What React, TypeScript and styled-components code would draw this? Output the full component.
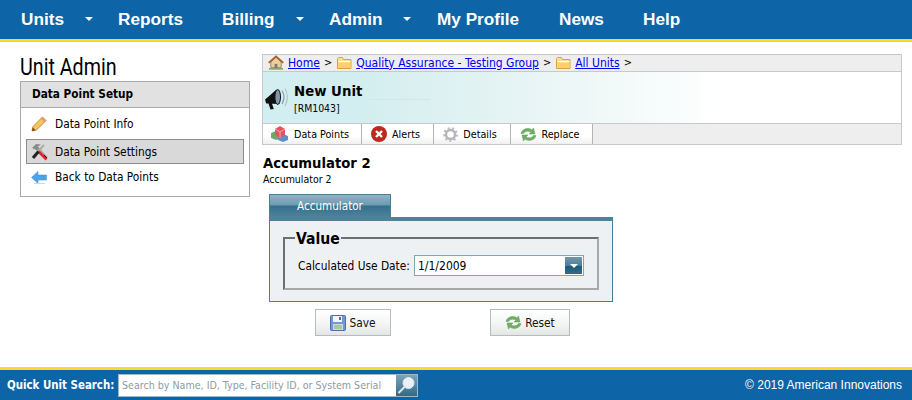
import React from "react";
import styled, { createGlobalStyle } from "styled-components";

const ui = `"DejaVu Sans Condensed", "Noto Sans", sans-serif`;

const Global = createGlobalStyle`
  html, body { margin: 0; padding: 0; background: #fff; }
  body { font-family: ${ui}; color: #000; }
`;

const Page = styled.div`
  width: 912px;
  height: 400px;
  display: flex;
  flex-direction: column;
  overflow: hidden;
`;

const Header = styled.nav`
  height: 39px;
  flex: none;
  box-sizing: content-box;
  background: #0d64a6;
  border-bottom: 3px solid #fcd925;
  display: flex;
  align-items: center;
  padding-left: 21px;
`;

const NavItem = styled.a<{ $w: number }>`
  width: ${(p) => p.$w}px;
  flex: none;
  display: flex;
  align-items: center;
  font: bold 17.2px "Liberation Sans", Arial, sans-serif;
  color: #fff;
  position: relative;
`;

const Caret = styled.span<{ $x: number }>`
  position: absolute;
  left: ${(p) => p.$x}px;
  top: 8px;
  width: 0;
  height: 0;
  border-left: 4px solid transparent;
  border-right: 4px solid transparent;
  border-top: 4px solid #fff;
`;

const Main = styled.main`
  flex: 1;
  display: flex;
  align-items: flex-start;
  padding: 12px 10px 0 20px;
  min-height: 0;
`;

const Side = styled.aside`
  width: 230px;
  flex: none;
  margin-right: 12px;
`;

const PageTitle = styled.h1`
  margin: 0;
  height: 27px;
  white-space: nowrap;
  font: 400 24px/27px Roboto, sans-serif;
  transform: scaleX(0.82);
  transform-origin: left center;
`;

const SideBox = styled.div`
  border: 1px solid #a9a9a9;
  box-sizing: border-box;
  height: 116px;
`;

const SideHead = styled.div`
  height: 25px;
  background: #e1e1e1;
  border-bottom: 1px solid #a9a9a9;
  font: bold 11.7px/25px ${ui};
  padding-left: 11px;
`;

const SideList = styled.div`
  display: flex;
  flex-direction: column;
  padding: 3px 5px 0;
`;

const SideItem = styled.div<{ $active?: boolean }>`
  height: ${(p) => (p.$active ? 25 : 26)}px;
  margin-top: ${(p) => (p.$active ? 2 : 0)}px;
  box-sizing: border-box;
  display: flex;
  align-items: center;
  padding-left: ${(p) => (p.$active ? 4 : 5)}px;
  font: 11.8px ${ui};
  background: ${(p) => (p.$active ? "#d9d9d9" : "transparent")};
  border: ${(p) => (p.$active ? "1px solid #8c8c8c" : "none")};
`;

const SideIcon = styled.span`
  width: 24px;
  flex: none;
  display: flex;
  align-items: center;
`;

const Content = styled.section`
  width: 640px;
  flex: none;
`;

const UnitCard = styled.div`
  border: 1px solid #c8c8c8;
  height: 91px;
  box-sizing: border-box;
  display: flex;
  flex-direction: column;
`;

const Crumbs = styled.div`
  height: 17px;
  flex: none;
  box-sizing: border-box;
  background: #eeeeee;
  border-bottom: 1px solid #c8c8c8;
  display: flex;
  align-items: center;
  padding: 0 0 1px 5px;
  gap: 4px;
  font: 12px ${ui};
  white-space: nowrap;
`;

const CrumbLink = styled.a`
  color: #0000ee;
  text-decoration: underline;
`;

const Sep = styled.span`
  margin-right: 1px;
  font-size: 11px;
`;

const Banner = styled.div`
  flex: 1;
  display: flex;
  align-items: center;
  padding-left: 1px;
  gap: 3px;
  background: linear-gradient(90deg, #d3eef0 0%, #d3eef0 15%, #dff1f2 30%, #eef7f7 50%, #fafdfd 66%, #ffffff 71%);
  border-bottom: 1px solid #c8c8c8;
`;

const UnitName = styled.div`
  margin-top: 1px;
  font: bold 14.8px/18px ${ui};
`;

const UnitCode = styled.div`
  font: 10.4px/12px ${ui};
  margin-top: 2px;
`;

const BannerRule = styled.span`
  width: 60px;
  height: 1px;
  margin: 0 0 -3px 5px;
  background: #cfe7e9;
`;

const TabBar = styled.div`
  height: 20px;
  flex: none;
  background: #eeeeee;
  display: flex;
`;

const Tab = styled.div<{ $w: number }>`
  width: ${(p) => p.$w}px;
  flex: none;
  box-sizing: border-box;
  display: flex;
  align-items: center;
  justify-content: center;
  gap: 5px;
  padding-right: 4px;
  border-right: 1px solid #b4b4b4;
  background: linear-gradient(180deg, #ffffff 0%, #ffffff 60%, #f0f0f0 100%);
  font: 10.7px ${ui};
`;

const H2 = styled.h2`
  margin: 9px 0 0;
  padding-left: 1px;
  font: bold 14.7px/18px ${ui};
`;

const Sub = styled.div`
  padding-left: 1px;
  font: 10.5px/14px ${ui};
`;

const EditArea = styled.div`
  margin: 8px 0 0 7px;
  width: 344px;
`;

const PanelTab = styled.div`
  width: 122px;
  height: 23px;
  box-sizing: border-box;
  border: 1px solid #4a7f97;
  border-bottom: none;
  background: linear-gradient(180deg, #8fb4c7 0%, #6d9bb0 45%, #33718f 50%, #4f819a 100%);
  color: #fff;
  font: 11.6px/23px ${ui};
  text-align: center;
`;

const Panel = styled.div`
  height: 85px;
  box-sizing: border-box;
  border: 1px solid #4a7f97;
  border-top: 4px solid #4f8199;
  background: #edf1f4;
  padding: 6px 13px 0 13px;
`;

const FieldSet = styled.fieldset`
  margin: 0;
  padding: 0 0 0 13px;
  height: 63px;
  box-sizing: border-box;
  border-style: solid;
  border-color: #6e6e6e #a8a8a8 #a8a8a8 #6e6e6e;
  border-width: 2px;
`;

const Legend = styled.legend`
  padding: 3px 1px 0;
  margin-left: -3px;
  font: bold 15.6px/18px ${ui};
`;

const FieldRow = styled.div`
  display: flex;
  align-items: center;
  margin-top: 7px;
  font: 11.8px ${ui};
`;

const FieldLabel = styled.span`
  width: 116px;
  flex: none;
  white-space: nowrap;
`;

const DateBox = styled.div`
  width: 170px;
  height: 21px;
  box-sizing: border-box;
  border: 1px solid #81a5b5;
  background: #fff;
  display: flex;
  align-items: center;
  justify-content: space-between;
  padding: 0 1px 0 3px;
  font: 12px ${ui};
`;

const DropBtn = styled.span`
  width: 17px;
  height: 17px;
  display: flex;
  align-items: center;
  justify-content: center;
  background: linear-gradient(180deg, #7096ac 0%, #4d7f9a 50%, #1f5a7a 55%, #2f6a88 100%);
`;

const DropArrow = styled.span`
  width: 0;
  height: 0;
  border-left: 4px solid transparent;
  border-right: 4px solid transparent;
  border-top: 4px solid #fff;
`;

const Buttons = styled.div`
  display: flex;
  margin: 7px 0 0 46px;
`;

const Btn = styled.button<{ $w: number; $ml?: number }>`
  width: ${(p) => p.$w}px;
  height: 27px;
  margin-left: ${(p) => p.$ml ?? 0}px;
  box-sizing: border-box;
  border: 1px solid #b4bcbf;
  background: linear-gradient(180deg, #ffffff 0%, #f6f6f6 50%, #e4e6e6 100%);
  display: flex;
  align-items: center;
  justify-content: center;
  gap: 3px;
  font: 11.8px ${ui};
  color: #111;
  padding: 0;
`;

const Footer = styled.footer`
  height: 30px;
  flex: none;
  border-top: 3px solid #fcd925;
  background: #0d64a6;
  display: flex;
  align-items: center;
  justify-content: space-between;
  padding: 0 10px 0 7px;
  color: #fff;
`;

const SearchLabel = styled.span`
  width: 111px;
  flex: none;
  font: bold 11.4px ${ui};
  white-space: nowrap;
`;

const SearchWrap = styled.div`
  display: flex;
  align-items: center;
`;

const SearchBox = styled.div`
  width: 300px;
  height: 23px;
  box-sizing: border-box;
  border: 1px solid #9fb8c6;
  background: #fff;
  display: flex;
  align-items: center;
  justify-content: space-between;
  padding: 0 0 0 3px;
  color: #8e9ba3;
  font: 10.6px ${ui};
  white-space: nowrap;
`;

const SearchBtn = styled.span`
  width: 21px;
  height: 21px;
  background: linear-gradient(180deg, #7ea3b7, #2f6a88);
  display: flex;
  align-items: center;
  justify-content: center;
`;

const Copy = styled.span`
  font: 12px "Liberation Sans", Arial, sans-serif;
`;

const Home = () => (
  <svg width="16" height="15" viewBox="0 0 17 15">
    <path d="M3 7v6h11V7L8.500 2z" fill="#e8cfa0" stroke="#a9824e" />
    <path d="M.7 8 8.500 1l7.800 7" fill="none" stroke="#a5602c" strokeWidth="1.800" />
    <rect x="7" y="9" width="3" height="4.500" fill="#7a7a7a" />
    <path d="M1 14.300h15" stroke="#5d9c4a" strokeWidth="1.400" />
  </svg>
);
const Folder = () => (
  <svg width="15" height="13" viewBox="0 0 15 13">
    <path d="M.5 2.500V12.500h13.500V3.500H6.500L5.500 1.500H1.500z" fill="#fbe08f" stroke="#d6a245" />
    <path d="M1.500 5.500h12" stroke="#fff" />
    <path d="M1.500 7h12v5h-12z" fill="#f9d070" />
  </svg>
);
const Horn = () => (
  <svg width="27" height="26" viewBox="0 0 27 26">
    <path d="M1 14.500 4 12 12.500 4.500 15.500 19 8 18.800l1.800 5.200-3.300.6-2-6.200-2.300.2z" fill="#111" />
    <ellipse cx="13.700" cy="12" rx="2.800" ry="7.500" fill="#7f97ad" stroke="#111" />
    <path d="M18 5.500c2.500 4 2.500 9 0 13.500" fill="none" stroke="#8b9cab" strokeWidth="1.200" />
    <path d="M21 3.500c3.200 5 3.200 12 0 17.500" fill="none" stroke="#b4bfc8" strokeWidth="1.100" />
  </svg>
);
const Pencil = () => (
  <svg width="16" height="16" viewBox="0 0 16 16">
    <path d="M1 15l1-4.500L11.500 1 15 4.500 5.500 14z" fill="#f4c564" stroke="#c78a2c" />
    <path d="M1 15l.8-3.500 2.700 2.700z" fill="#6e4a1f" />
    <path d="M10.500 2l3.500 3.500" stroke="#e88" strokeWidth="1.500" />
  </svg>
);
const Tools = () => (
  <svg width="18" height="18" viewBox="0 0 18 18">
    <path d="M5 3l11 12" stroke="#a0a0a0" strokeWidth="2" />
    <path d="M1 5l4-4 5 .5-3 2 1 2.500-2 1.500z" fill="#8b8b8b" />
    <path d="M13 2 2 14" stroke="#aaa" strokeWidth="2" />
    <path d="M7.500 8.500 15.500 16.500" stroke="#d8262c" strokeWidth="2.500" />
    <path d="M7.500 8.500 2 15" stroke="#222" strokeWidth="3" />
    <path d="M13 12 16 15" stroke="#222" strokeWidth="1" />
  </svg>
);
const ArrowLeft = () => (
  <svg width="16" height="15" viewBox="0 0 16 15">
    <path d="M0.500 7.500 7 1.500v3.500h8.500v5H7v3.500z" fill="#4ea3e6" stroke="#3b8ccc" strokeWidth=".5" />
    <path d="M3 13.500h11" stroke="#d5d5d5" />
  </svg>
);
const Cubes = () => (
  <svg width="18" height="16" viewBox="0 0 18 16">
    <path d="M0 7l5-2 3 2v6l-3 1-5-2z" fill="#6fa76c" />
    <path d="M7 10l5-2 5 2v4l-5 2-5-2z" fill="#5f8fc8" />
    <path d="M4 3l5-3 5 3v6l-5 3-5-3z" fill="#e2555e" />
    <path d="M4 3l5 3 5-3M9 6v6" stroke="#f5a3a8" fill="none" />
  </svg>
);
const XCircle = () => (
  <svg width="16" height="16" viewBox="0 0 16 16">
    <circle cx="8" cy="8" r="8" fill="#bb2a1c" />
    <path d="M5 5l6 6M11 5l-6 6" stroke="#fff" strokeWidth="2.400" />
  </svg>
);
const Gear = () => (
  <svg width="15" height="15" viewBox="0 0 15 15">
    <circle cx="7.500" cy="7.500" r="4.500" fill="none" stroke="#b5b5b5" strokeWidth="2.400" />
    <circle cx="7.500" cy="7.500" r="6.400" fill="none" stroke="#bcbcbc" strokeWidth="2" strokeDasharray="2.200 2.200" />
  </svg>
);
const Refresh = () => (
  <svg width="17" height="15" viewBox="0 0 17 15">
    <path d="M1 6.500C2 2 8 0 12 3l1.500-2 1.500 6h-6l2-2C8 3.500 5 4 3.500 6.500z" fill="#6eb064" stroke="#5a9a52" strokeWidth=".5" />
    <path d="M16 8.500C15 13 9 15 5 12l-1.500 2L2 8h6l-2 2c3 1.500 6 1 7.500-1.500z" fill="#6eb064" stroke="#5a9a52" strokeWidth=".5" />
  </svg>
);
const Floppy = () => (
  <svg width="16" height="16" viewBox="0 0 16 16">
    <path d="M.5 1.500a1 1 0 0 1 1-1h13a1 1 0 0 1 1 1v13a1 1 0 0 1-1 1h-13a1 1 0 0 1-1-1z" fill="#6d9bd8" stroke="#4a6fa8" />
    <rect x="3" y="1" width="9" height="6" fill="#f2f6fb" />
    <rect x="9" y="2" width="2" height="3" fill="#4a6fa8" />
    <rect x="3" y="9" width="10" height="6" fill="#cfe0bd" />
    <path d="M4 11h8M4 13h8" stroke="#8fa97b" />
  </svg>
);
const Lens = () => (
  <svg width="19" height="19" viewBox="0 0 19 19">
    <circle cx="11.500" cy="7" r="5.500" fill="#e8f1f5" stroke="#dfe9ee" />
    <path d="M7.500 11 1.500 17" stroke="#e6e6e6" strokeWidth="2" />
  </svg>
);

export default function App() {
  return (
    <Page>
      <Global />
      <Header>
        <NavItem $w={97}>Units<Caret $x={64} /></NavItem>
        <NavItem $w={104}>Reports</NavItem>
        <NavItem $w={107}>Billing<Caret $x={74} /></NavItem>
        <NavItem $w={108}>Admin<Caret $x={74} /></NavItem>
        <NavItem $w={122}>My Profile</NavItem>
        <NavItem $w={84}>News</NavItem>
        <NavItem $w={60}>Help</NavItem>
      </Header>
      <Main>
        <Side>
          <PageTitle>Unit Admin</PageTitle>
          <SideBox>
            <SideHead>Data Point Setup</SideHead>
            <SideList>
              <SideItem><SideIcon><Pencil /></SideIcon>Data Point Info</SideItem>
              <SideItem $active><SideIcon><Tools /></SideIcon>Data Point Settings</SideItem>
              <SideItem><SideIcon><ArrowLeft /></SideIcon>Back to Data Points</SideItem>
            </SideList>
          </SideBox>
        </Side>
        <Content>
          <UnitCard>
            <Crumbs>
              <Home /><CrumbLink>Home</CrumbLink><Sep>&gt;</Sep>
              <Folder /><CrumbLink>Quality Assurance - Testing Group</CrumbLink><Sep>&gt;</Sep>
              <Folder /><CrumbLink>All Units</CrumbLink><Sep>&gt;</Sep>
            </Crumbs>
            <Banner>
              <Horn />
              <div>
                <UnitName>New Unit</UnitName>
                <UnitCode>[RM1043]</UnitCode>
              </div>
              <BannerRule />
            </Banner>
            <TabBar>
              <Tab $w={99}><Cubes />Data Points</Tab>
              <Tab $w={72}><XCircle />Alerts</Tab>
              <Tab $w={77}><Gear />Details</Tab>
              <Tab $w={82}><Refresh />Replace</Tab>
            </TabBar>
          </UnitCard>
          <H2>Accumulator 2</H2>
          <Sub>Accumulator 2</Sub>
          <EditArea>
            <PanelTab>Accumulator</PanelTab>
            <Panel>
              <FieldSet>
                <Legend>Value</Legend>
                <FieldRow>
                  <FieldLabel>Calculated Use Date:</FieldLabel>
                  <DateBox>1/1/2009<DropBtn><DropArrow /></DropBtn></DateBox>
                </FieldRow>
              </FieldSet>
            </Panel>
            <Buttons>
              <Btn $w={76}><Floppy />Save</Btn>
              <Btn $w={80} $ml={99}><Refresh />Reset</Btn>
            </Buttons>
          </EditArea>
        </Content>
      </Main>
      <Footer>
        <SearchWrap>
          <SearchLabel>Quick Unit Search:</SearchLabel>
          <SearchBox>
            Search by Name, ID, Type, Facility ID, or System Serial
            <SearchBtn><Lens /></SearchBtn>
          </SearchBox>
        </SearchWrap>
        <Copy>© 2019 American Innovations</Copy>
      </Footer>
    </Page>
  );
}
